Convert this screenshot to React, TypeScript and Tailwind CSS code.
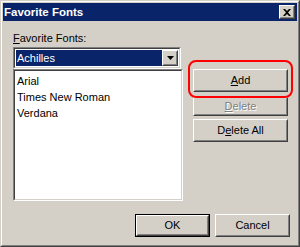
import type { ReactNode } from "react"

function Bevel({ children, className = "" }: { children: ReactNode; className?: string }) {
  return (
    <div className={`border border-t-white border-l-white border-r-[#404040] border-b-[#404040] ${className}`}>
      <div className="w-full h-full border border-t-[#d4d0c8] border-l-[#d4d0c8] border-r-[#808080] border-b-[#808080] flex items-center justify-center">
        {children}
      </div>
    </div>
  )
}

function Btn({ children, className = "", isDefault = false }: { children: ReactNode; className?: string; isDefault?: boolean }) {
  if (isDefault) {
    return (
      <div className={`border border-black ${className}`}>
        <Bevel className="w-full h-full">{children}</Bevel>
      </div>
    )
  }
  return <Bevel className={className}>{children}</Bevel>
}

function Sunken({ children, className = "" }: { children: ReactNode; className?: string }) {
  return (
    <div className={`border border-t-[#808080] border-l-[#808080] border-r-white border-b-white ${className}`}>
      <div className="w-full h-full border border-t-[#404040] border-l-[#404040] border-r-[#d4d0c8] border-b-[#d4d0c8] bg-white">
        {children}
      </div>
    </div>
  )
}

export default function App() {
  const fonts = ["Arial", "Times New Roman", "Verdana"]

  return (
    <div className="w-[300px] h-[247px] border border-t-[#d4d0c8] border-l-[#d4d0c8] border-r-[#404040] border-b-[#404040] font-['Liberation_Sans',Arial,sans-serif] text-[11px] leading-[13px] text-black">
      <div className="h-full border border-t-white border-l-white border-r-[#808080] border-b-[#808080] bg-[#d4d0c8] p-px flex flex-col">
        {/* title bar */}
        <div className="h-[18px] bg-[#0a246a] flex items-center justify-between pl-[1px] pr-[2px]">
          <span className="text-white font-bold text-[11.5px]">Favorite Fonts</span>
          <Bevel className="w-[16px] h-[14px] bg-[#d4d0c8]">
            <svg width="8" height="7" viewBox="0 0 8 7">
              <path d="M0 0h2l2 2 2-2h2L5 3.5 8 7H6L4 5 2 7H0l3-3.5z" fill="black" />
            </svg>
          </Bevel>
        </div>

        <div className="flex-1 flex flex-col pl-[10px] pt-[11px]">
          <div className="h-[13px] mb-[2px]">
            <span className="underline">F</span>avorite Fonts:
          </div>

          <div className="flex">
            <div className="w-[170px] flex flex-col">
              <Sunken className="w-[168px] h-[22px]">
                <div className="flex h-full p-px">
                  <div className="flex-1 bg-[#0a246a] text-white pl-[1px] flex items-center">Achilles</div>
                  <Bevel className="w-[16px] h-full bg-[#d4d0c8]">
                    <svg width="7" height="4" viewBox="0 0 7 4">
                      <path d="M0 0h7L3.5 4z" fill="black" />
                    </svg>
                  </Bevel>
                </div>
              </Sunken>
              <Sunken className="w-[170px] h-[132px]">
                <div className="pl-[2px] pt-[2px]">
                  {fonts.map((f) => (
                    <div key={f} className="h-[16px] flex items-center">
                      {f}
                    </div>
                  ))}
                </div>
              </Sunken>
            </div>

            <div className="ml-[10px] pt-[22px] flex flex-col">
              <div className="relative">
                <Btn className="w-[95px] h-[23px]">
                  <span>
                    <span className="underline">A</span>dd
                  </span>
                </Btn>
                <div className="absolute -left-[5px] -right-[5px] -top-[9px] -bottom-[6px] border-2 border-[#ff0000] rounded-[8px]" />
              </div>
              <Btn className="w-[95px] h-[19px] mt-[5px]">
                <span className="text-[#808080] [text-shadow:1px_1px_0_#fff]">
                  <span className="underline">D</span>elete
                </span>
              </Btn>
              <Btn className="w-[95px] h-[23px] mt-[3px]">
                <span>
                  D<span className="underline">e</span>lete All
                </span>
              </Btn>
            </div>
          </div>

          <div className="mt-auto flex justify-end gap-[5px] pr-[7px] pb-[7px]">
            <Btn isDefault className="w-[75px] h-[23px]">OK</Btn>
            <Btn className="w-[75px] h-[23px]">Cancel</Btn>
          </div>
        </div>
      </div>
    </div>
  )
}
